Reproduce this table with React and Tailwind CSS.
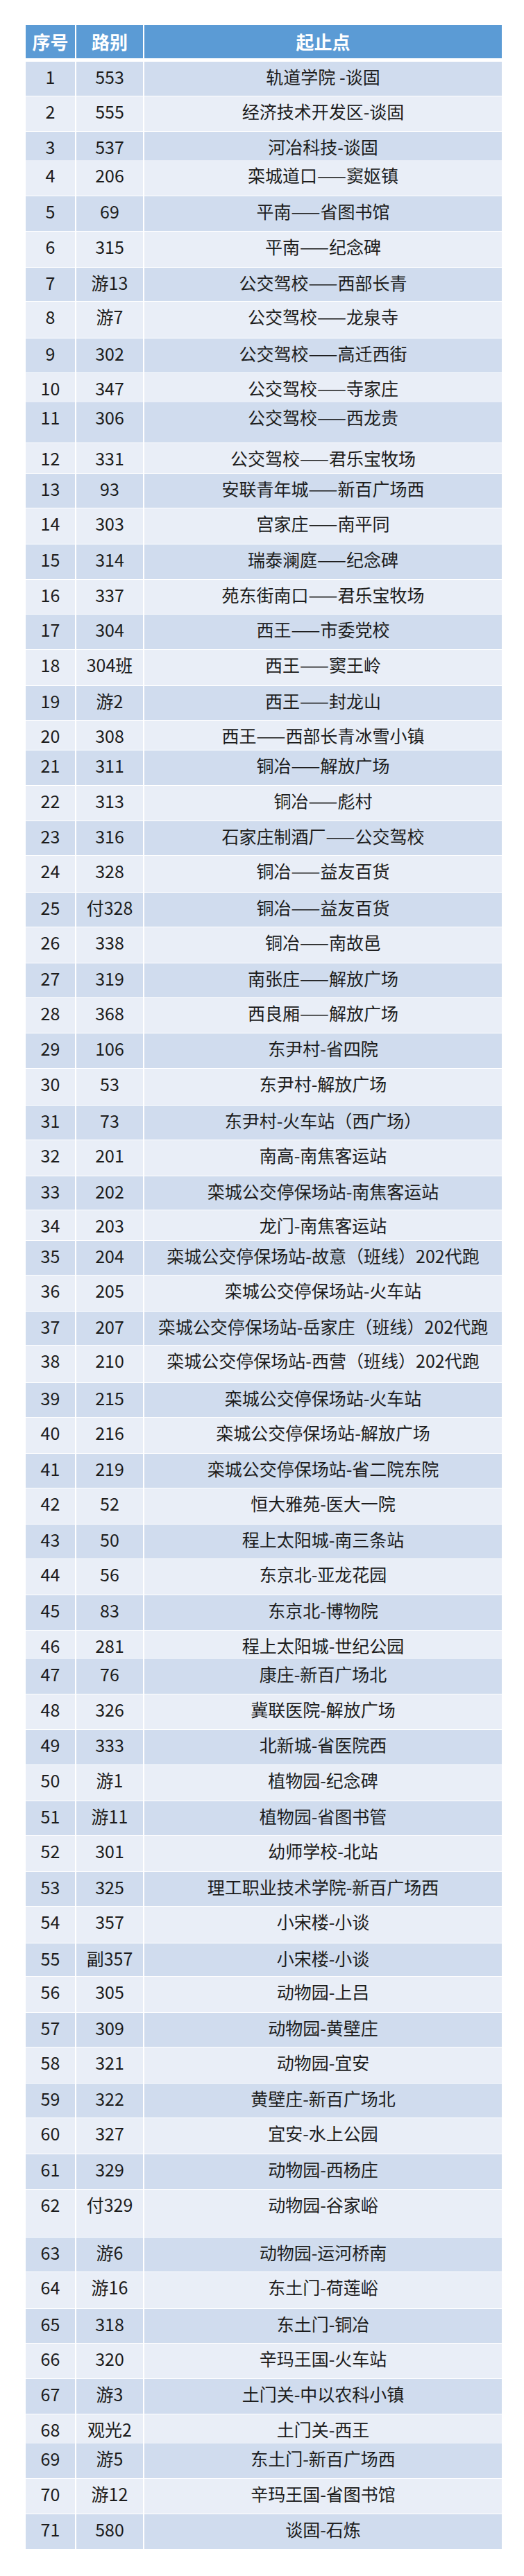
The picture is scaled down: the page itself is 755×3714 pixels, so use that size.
import React from 'react';

const rows = [
  [1, '553', '轨道学院 -谈固', 50],
  [2, '555', '经济技术开发区-谈固', 51],
  [3, '537', '河冶科技-谈固', 41],
  [4, '206', '栾城道口——窦妪镇', 52],
  [5, '69', '平南——省图书馆', 51],
  [6, '315', '平南——纪念碑', 52],
  [7, '游13', '公交驾校——西部长青', 49],
  [8, '游7', '公交驾校——龙泉寺', 53],
  [9, '302', '公交驾校——高迁西街', 50],
  [10, '347', '公交驾校——寺家庄', 42],
  [11, '306', '公交驾校——西龙贵', 59],
  [12, '331', '公交驾校——君乐宝牧场', 44],
  [13, '93', '安联青年城——新百广场西', 50],
  [14, '303', '宫家庄——南平同', 52],
  [15, '314', '瑞泰澜庭——纪念碑', 51],
  [16, '337', '苑东街南口——君乐宝牧场', 50],
  [17, '304', '西王——市委党校', 51],
  [18, '304班', '西王——窦王岭', 52],
  [19, '游2', '西王——封龙山', 50],
  [20, '308', '西王——西部长青冰雪小镇', 43],
  [21, '311', '铜冶——解放广场', 51],
  [22, '313', '铜冶——彪村', 51],
  [23, '316', '石家庄制酒厂——公交驾校', 50],
  [24, '328', '铜冶——益友百货', 53],
  [25, '付328', '铜冶——益友百货', 50],
  [26, '338', '铜冶——南故邑', 52],
  [27, '319', '南张庄——解放广场', 50],
  [28, '368', '西良厢——解放广场', 51],
  [29, '106', '东尹村-省四院', 51],
  [30, '53', '东尹村-解放广场', 53],
  [31, '73', '东尹村-火车站（西广场）', 50],
  [32, '201', '南高-南焦客运站', 52],
  [33, '202', '栾城公交停保场站-南焦客运站', 49],
  [34, '203', '龙门-南焦客运站', 44],
  [35, '204', '栾城公交停保场站-故意（班线）202代跑', 50],
  [36, '205', '栾城公交停保场站-火车站', 52],
  [37, '207', '栾城公交停保场站-岳家庄（班线）202代跑', 49],
  [38, '210', '栾城公交停保场站-西营（班线）202代跑', 54],
  [39, '215', '栾城公交停保场站-火车站', 50],
  [40, '216', '栾城公交停保场站-解放广场', 52],
  [41, '219', '栾城公交停保场站-省二院东院', 50],
  [42, '52', '恒大雅苑-医大一院', 52],
  [43, '50', '程上太阳城-南三条站', 50],
  [44, '56', '东京北-亚龙花园', 52],
  [45, '83', '东京北-博物院', 51],
  [46, '281', '程上太阳城-世纪公园', 41],
  [47, '76', '康庄-新百广场北', 51],
  [48, '326', '冀联医院-解放广场', 51],
  [49, '333', '北新城-省医院西', 51],
  [50, '游1', '植物园-纪念碑', 52],
  [51, '游11', '植物园-省图书管', 50],
  [52, '301', '幼师学校-北站', 52],
  [53, '325', '理工职业技术学院-新百广场西', 50],
  [54, '357', '小宋楼-小谈', 53],
  [55, '副357', '小宋楼-小谈', 48],
  [56, '305', '动物园-上吕', 52],
  [57, '309', '动物园-黄壁庄', 50],
  [58, '321', '动物园-宜安', 52],
  [59, '322', '黄壁庄-新百广场北', 50],
  [60, '327', '宜安-水上公园', 52],
  [61, '329', '动物园-西杨庄', 51],
  [62, '付329', '动物园-谷家峪', 69],
  [63, '游6', '动物园-运河桥南', 50],
  [64, '游16', '东土门-荷莲峪', 53],
  [65, '318', '东土门-铜冶', 50],
  [66, '320', '辛玛王国-火车站', 51],
  [67, '游3', '土门关-中以农科小镇', 51],
  [68, '观光2', '土门关-西王', 42],
  [69, '游5', '东土门-新百广场西', 51],
  [70, '游12', '辛玛王国-省图书馆', 51],
  [71, '580', '谈固-石炼', 51],
];

const font = { fontFamily: '"Noto Sans CJK SC", "Noto Sans", sans-serif' };

const Row = ({ no, line, route, h }) => {
  const bg = no % 2 === 1 ? 'bg-[#d0dcee]' : 'bg-[#e9eef7]';
  return (
    <div className="grid grid-cols-[71px_96px_1fr] gap-x-[2px] border-t border-white/70" style={{ height: h }}>
      <div className={`${bg} text-center`}>{no}</div>
      <div className={`${bg} text-center`}>{line}</div>
      <div className={`${bg} text-center whitespace-nowrap`}>{route}</div>
    </div>
  );
};

export default function App() {
  return (
    <div className="w-[755px] h-[3714px] bg-white pt-[36px]" style={font}>
      <div className="ml-[37px] w-[686px]">
        <div className="grid grid-cols-[71px_96px_1fr] gap-x-[2px] h-[48px] text-white font-bold text-[26px] leading-[48px]">
          <div className="bg-[#5b9bd5] text-center">序号</div>
          <div className="bg-[#5b9bd5] text-center">路别</div>
          <div className="bg-[#5b9bd5] text-center">起止点</div>
        </div>
        <div className="mt-[4px] text-[25px] leading-[42px] text-[#1c1c1c]">
          {rows.map(([no, line, route, h]) => (
            <Row key={no} no={no} line={line} route={route} h={h} />
          ))}
        </div>
      </div>
    </div>
  );
}
